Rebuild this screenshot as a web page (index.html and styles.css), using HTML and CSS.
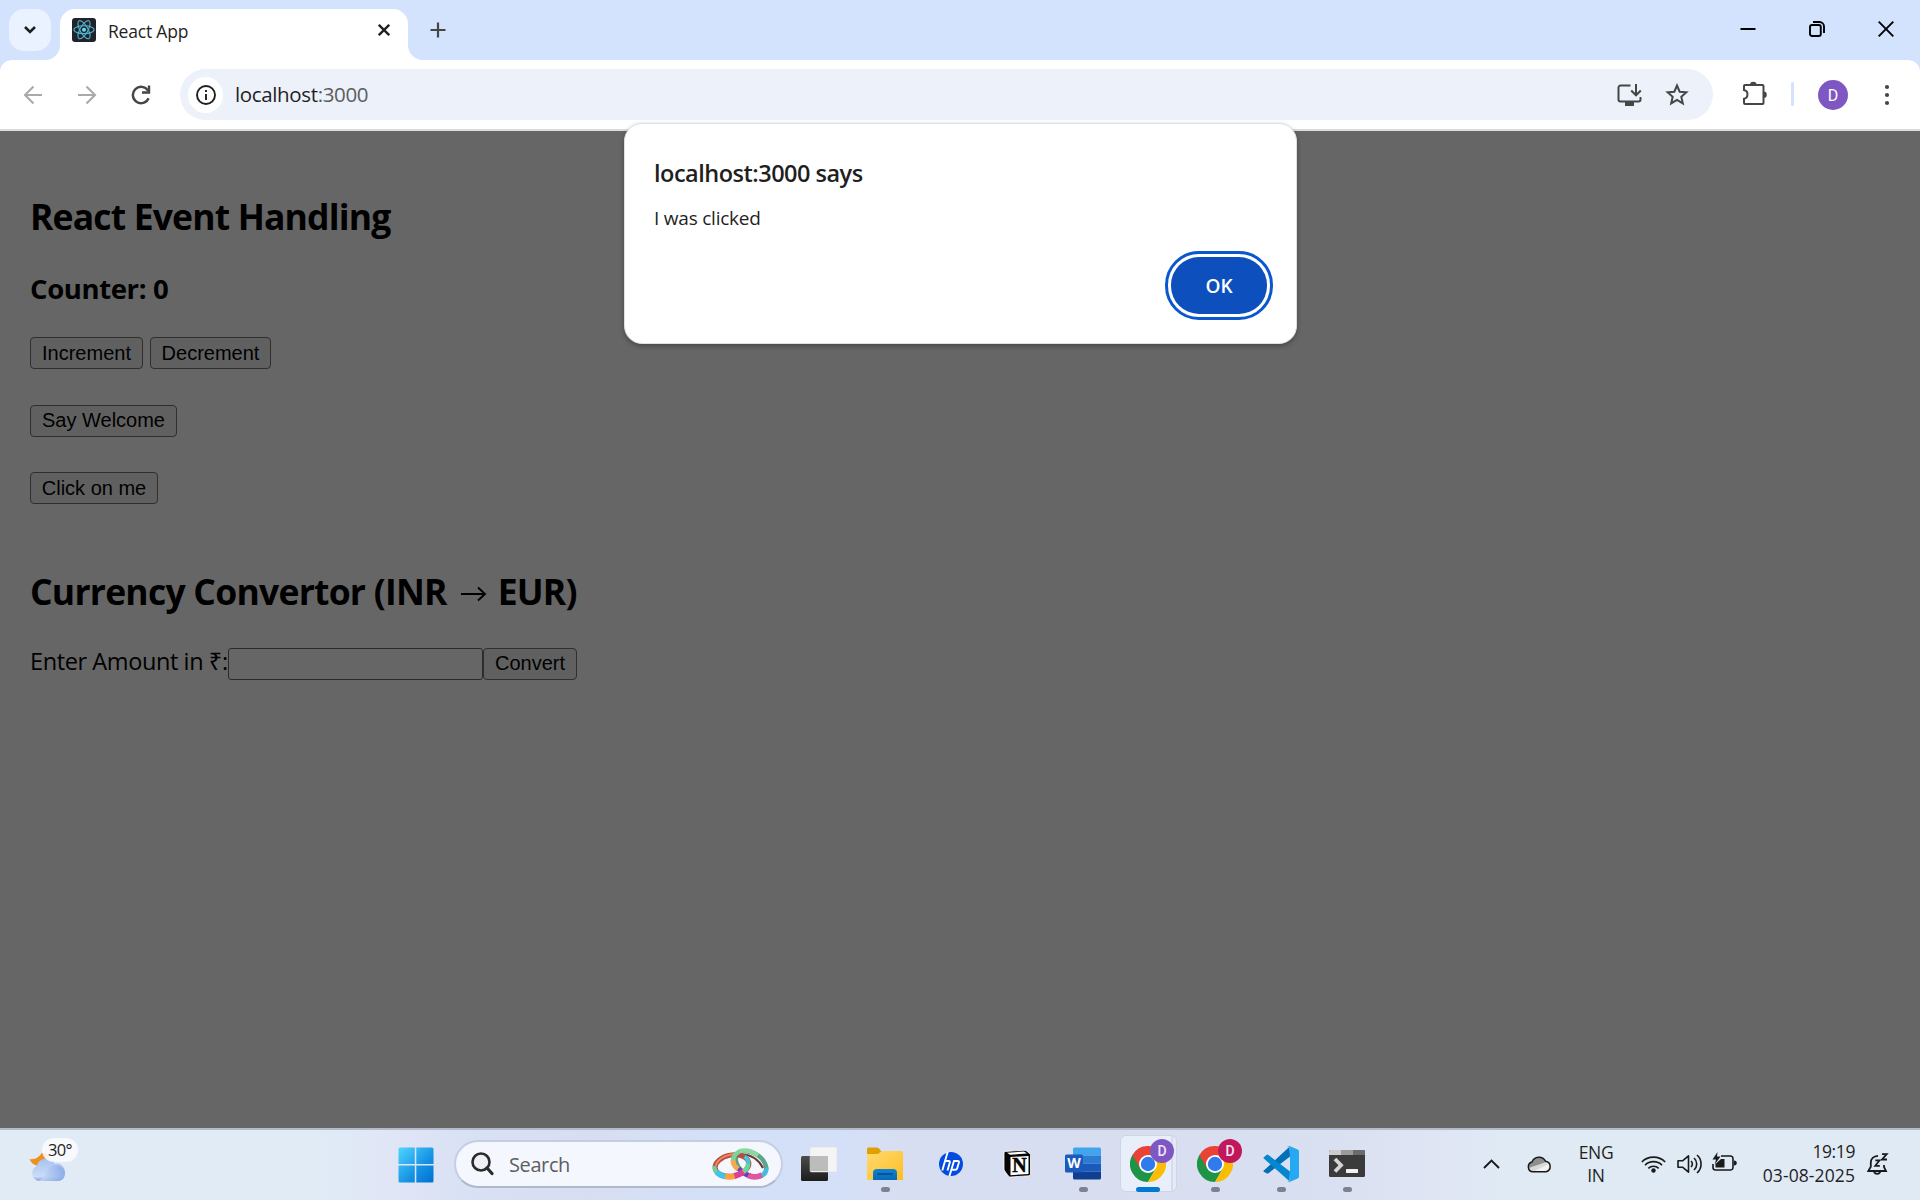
FILE: index.html
```
<!DOCTYPE html>
<html lang="en">
<head>
<meta charset="utf-8">
<title>React App</title>
<link rel="stylesheet" href="styles.css">
</head>
<body>
<div class="screen">
  <header class="tabstrip">
    <button class="tab-search" aria-label="Search tabs"><svg width="14" height="10" viewBox="0 0 14 10"><path d="M2 2l5 5 5-5" fill="none" stroke="#1f1f1f" stroke-width="2.6"/></svg></button>
    <div class="tab">
      <svg class="favicon" width="24" height="24" viewBox="0 0 24 24"><rect width="24" height="24" rx="3" fill="#20232a"/><g fill="none" stroke="#53b9d4" stroke-width="1.1"><ellipse cx="12" cy="11.7" rx="10.2" ry="3.9"/><ellipse cx="12" cy="11.7" rx="10.2" ry="3.9" transform="rotate(60 12 11.7)"/><ellipse cx="12" cy="11.7" rx="10.2" ry="3.9" transform="rotate(120 12 11.7)"/></g><circle cx="12" cy="11.7" r="2" fill="#61dafb"/></svg>
      <span class="tab-title">React App</span>
      <svg class="tab-close" width="12" height="12" viewBox="0 0 12 12"><path d="M.8.8l10.4 10.4M11.2.8L.8 11.2" stroke="#1f1f1f" stroke-width="2.3"/></svg>
    </div>
    <svg class="new-tab" width="16" height="16" viewBox="0 0 16 16"><path d="M8 .5v15M.5 8h15" stroke="#444746" stroke-width="2.2"/></svg>
    <div class="window-controls">
      <svg width="16" height="16" viewBox="0 0 16 16"><path d="M.5 8h15" stroke="#000" stroke-width="2"/></svg>
      <svg width="16" height="16" viewBox="0 0 16 16"><rect x="1" y="4" width="10.8" height="11" rx="2" fill="none" stroke="#000" stroke-width="1.9"/><path d="M4 1h6.5A4.5 4.5 0 0 1 15 5.5V12" fill="none" stroke="#000" stroke-width="1.9"/></svg>
      <svg width="16" height="16" viewBox="0 0 16 16"><path d="M.7.7l14.6 14.6M15.3.7L.7 15.3" stroke="#000" stroke-width="1.9"/></svg>
    </div>
  </header>

  <div class="toolbar-back">
  <nav class="toolbar">
    <svg class="nav-back" width="20" height="20" viewBox="0 0 20 20"><path d="M18 10H1.500M9.500 1.500L1 10l8.500 8.500" fill="none" stroke="#a9aaaa" stroke-width="2.1"/></svg>
    <svg class="nav-forward" width="20" height="20" viewBox="0 0 20 20"><path d="M1 10h16.500M9.500 1.500L18 10l-8.500 8.500" fill="none" stroke="#a9aaaa" stroke-width="2.1"/></svg>
    <svg class="nav-reload" width="20" height="20" viewBox="0 0 20 20"><path d="M17.600 13.200A8.200 8.200 0 1 1 17 5.600" fill="none" stroke="#444746" stroke-width="2.400"/><path d="M18 .6V7.500H11" fill="none" stroke="#444746" stroke-width="2.400"/></svg>
    <div class="omnibox">
      <span class="site-info"><svg width="20" height="20" viewBox="0 0 20 20"><circle cx="10" cy="10" r="9" fill="none" stroke="#1f1f1f" stroke-width="1.900"/><path d="M10 9v6M10 5v2" stroke="#1f1f1f" stroke-width="1.900"/></svg></span>
      <span class="url">localhost<span class="port">:3000</span></span>
      <svg class="install" width="25" height="22" viewBox="0 0 25 22"><path d="M13.500 1.500H3.500a2 2 0 0 0-2 2V15.500a2 2 0 0 0 2 2h18a2 2 0 0 0 2-2V13" fill="none" stroke="#444746" stroke-width="2"/><path d="M8 18h9v4H8z" fill="#444746"/><path d="M19 0v10.500M14.200 6.500l4.800 4.800 4.800-4.800" fill="none" stroke="#444746" stroke-width="2"/></svg>
      <svg class="star" width="24" height="23" viewBox="0 0 24 23"><path d="M12 2.500l2.650 6.200 6.700.6-5.050 4.450 1.500 6.600L12 16.850 6.200 20.350l1.500-6.600L2.650 9.300l6.700-.6z" fill="none" stroke="#444746" stroke-width="2"/></svg>
    </div>
    <svg class="puzzle" width="26" height="25" viewBox="0 0 26 25"><path d="M3 4h17.500a1 1 0 0 1 1 1V22a1 1 0 0 1-1 1H3a1 1 0 0 1-1-1v-4.300a4.400 4.400 0 0 0 0-8.600V5a1 1 0 0 1 1-1z" fill="none" stroke="#444746" stroke-width="2"/><path d="M8 4a3.300 3.300 0 0 1 6.600 0zM21.500 10.500a3.300 3.300 0 0 1 0 6.600z" fill="#444746"/></svg>
    <span class="divider"></span>
    <span class="avatar">D</span>
    <svg class="kebab" width="6" height="22" viewBox="0 0 6 22"><g fill="#444746"><circle cx="3" cy="3" r="2.100"/><circle cx="3" cy="11" r="2.100"/><circle cx="3" cy="19" r="2.100"/></g></svg>
  </nav>
  </div>

  <main class="page">
    <h1 class="title">React Event Handling</h1>
    <h2 class="counter">Counter: 0</h2>
    <div class="button-row row-counter"><button class="btn increment">Increment</button><button class="btn decrement">Decrement</button></div>
    <div class="button-row row-welcome"><button class="btn raised welcome">Say Welcome</button></div>
    <div class="button-row row-click"><button class="btn click-me">Click on me</button></div>
    <h1 class="title converter-title">Currency Convertor (INR <svg class="arrow" width="26" height="16" viewBox="0 0 26 16"><path d="M0 8h24M17 1.500L24 8l-7 6.500" fill="none" stroke="#000" stroke-width="1.900"/></svg> EUR)</h1>
    <div class="converter"><label class="amount-label">Enter Amount in ₹:</label><input class="amount" type="text" aria-label="Amount"><button class="btn raised convert">Convert</button></div>
  </main>

  <footer class="taskbar">
    <div class="weather">
      <svg width="37" height="30" viewBox="0 0 37 30"><defs><linearGradient id="cl" x1="0" y1="0" x2="0" y2="1"><stop offset="0" stop-color="#a5c2f0"/><stop offset=".8" stop-color="#cbdcf7"/><stop offset="1" stop-color="#7fa4e6"/></linearGradient><linearGradient id="cr"><stop offset="0" stop-color="#d3e2f8"/><stop offset="1" stop-color="#7b9fe4"/></linearGradient></defs><path d="M.5 6c6 1 10-2 13-7h6v14H9C5 12 2 10 .5 6z" fill="#f08f1d"/><path d="M9 28a8 8 0 0 1-1-15c1-8 14-11 18-2 6-2 10 3 10 9 0 5-3 8-8 8z" fill="url(#cl)"/><path d="M9 28c7-2 7-8 10-12 4-6 17-5 17 4 0 5-3 8-8 8z" fill="url(#cr)" opacity=".75"/></svg>
      <span class="temp">30°</span>
    </div>
    <svg class="start" width="36" height="36" viewBox="0 0 36 36"><defs><linearGradient id="win" x1="0" y1="0" x2="1" y2="1"><stop offset="0" stop-color="#50d5ff"/><stop offset=".6" stop-color="#1592e3"/><stop offset="1" stop-color="#0071d0"/></linearGradient></defs><path d="M2 .5h14.800v16.600H.5V2A1.500 1.500 0 0 1 2 .5zM18.300.5H34A1.500 1.500 0 0 1 35.500 2v15.100H18.300zM.5 18.500h16.300v17H2A1.500 1.500 0 0 1 .5 34zM18.300 18.500h17.200V34a1.500 1.500 0 0 1-1.500 1.500H18.300z" fill="url(#win)"/></svg>
    <div class="search">
      <svg width="23" height="24" viewBox="0 0 23 24"><circle cx="10" cy="10" r="8.500" fill="#eef0f6" stroke="#2b2b2b" stroke-width="2.600"/><path d="M16 16l5 5.500" stroke="#2b2b2b" stroke-width="3.200" stroke-linecap="round"/></svg>
      <span class="search-text">Search</span>
      <svg class="rings" width="58" height="32" viewBox="0 0 58 32"><g fill="none"><ellipse cx="39" cy="16" rx="16.500" ry="11" transform="rotate(32 39 16)" stroke="#5f9f85" stroke-width="4.500"/><path d="M27 7Q43 5 51 20" stroke="#6b3a33" stroke-width="2.200"/><path d="M26.500 20.500q5 6 12 7.500" stroke="#6939c9" stroke-width="5"/><path d="M36 27.500q7 3 14-.5" stroke="#e0559f" stroke-width="5.500"/><path d="M50 27.500q5-2.500 4.500-8" stroke="#45bde0" stroke-width="4"/><path d="M54.500 20q-1-7-8-12" stroke="#5aa796" stroke-width="3"/><path d="M46 7.500Q36 .5 27 3.500" stroke="#8bd8a0" stroke-width="4.500"/><ellipse cx="20" cy="17.500" rx="17" ry="10.500" transform="rotate(-10 20 17.500)" stroke="#b94c3a" stroke-width="5"/><path d="M3.500 18Q7 7.500 23 6" stroke="#ed8a65" stroke-width="2"/><path d="M2.500 18q-.5 4 2.500 6.500" stroke="#72cf9c" stroke-width="4"/><path d="M4.500 24q4 4 9 4.500" stroke="#3ec6ea" stroke-width="5.500"/><path d="M13 28.500q5 1 10-.5" stroke="#f8a13e" stroke-width="5.500"/><path d="M22.500 28q6-1.500 9.500-5" stroke="#df3d92" stroke-width="6"/><path d="M31.500 24q5-4 4.500-9" stroke="#69d69c" stroke-width="4.500"/><path d="M36.500 16q0-5-4-7.500" stroke="#45c5df" stroke-width="4"/><path d="M27.500 3.500q-8 4-6 12" stroke="#7ad39a" stroke-width="4.500"/><path d="M21 12q0 6 5 9" stroke="#f5aa50" stroke-width="5"/></g></svg>
    </div>
    <div class="app"><svg width="36" height="36" viewBox="0 0 36 36"><defs><linearGradient id="tv" x1="0" y1="0" x2="0" y2="1"><stop offset="0" stop-color="#4b4b48"/><stop offset="1" stop-color="#1d1d1c"/></linearGradient></defs><rect y="10" width="27" height="25" rx="1.500" fill="url(#tv)"/><rect x="9" y="1" width="27" height="25" rx="1.500" fill="#f4f4f4" stroke="#ddd" stroke-width=".5"/><path d="M9 10h18v15H9z" fill="#bcbcbc"/></svg></div>
    <div class="app"><svg width="36" height="36" viewBox="0 0 36 36"><defs><linearGradient id="fo" x1="0" y1="0" x2="1" y2="1"><stop offset="0" stop-color="#ffdb70"/><stop offset="1" stop-color="#fdbd22"/></linearGradient><linearGradient id="fb" x1="0" y1="0" x2="0" y2="1"><stop offset="0" stop-color="#1282d2"/><stop offset="1" stop-color="#0869b8"/></linearGradient></defs><path d="M0 3q0-1.500 1.500-1.500H10q1.500 0 2.500 1.500L14 5H34v8H0z" fill="#dfa000"/><path d="M0 8h11l3.500-3H34q2 0 2 2v27H0z" fill="url(#fo)"/><path d="M6 34V27q0-4 4-4h16q4 0 4 4v7z" fill="url(#fb)"/><path d="M11 28h14" stroke="#08559b" stroke-width="2" stroke-linecap="round"/></svg><i class="dot"></i></div>
    <div class="app"><svg width="24" height="24" viewBox="0 0 24 24"><circle cx="12" cy="12" r="12" fill="#034be1"/><g fill="none" stroke="#fff" stroke-width="1.900"><path d="M8.800-.5L3.300 18.500M6.200 9h3.600q1.400 0 1 1.500L8.500 18.500"/><path d="M10.300 24.500L15 9h3.800q1.500 0 1.100 1.500l-1.700 5.700q-.4 1.500-1.900 1.500h-3.500"/></g></svg></div>
    <div class="app"><svg width="28" height="29" viewBox="0 0 28 29"><path d="M2 2.500L21 1.200q1.500 0 2.500.8l3.500 2.800q.5.500.5 1.500V25q0 1.700-1.700 1.800L7.500 28q-1.500 0-2.200-1L1.700 22Q1 21 1 20V4q0-1.400 1-1.500z" fill="#050505" stroke="#fff" stroke-width=".8"/><path d="M4 3.700l17-1.200 3 2-17 1.200z" fill="#fff"/><path d="M7.500 8l18-1v18l-18 1.200z" fill="#fff"/><text class="notion-letter" x="9.200" y="23.300">N</text></svg></div>
    <div class="app"><svg width="36" height="34" viewBox="0 0 36 34"><path d="M8 2q0-1.500 1.500-1.500h25Q36 .5 36 2v6.500H8z" fill="#41a5ee"/><path d="M8 8.500h28v8H8z" fill="#2b7cd3"/><path d="M8 16.500h28v8H8z" fill="#185abd"/><path d="M8 24.500h28V31q0 1.500-1.500 1.500h-25Q8 32.500 8 31z" fill="#103f91"/><rect y="7.500" width="18" height="18" rx="1.500" fill="#1b5bbd"/><text class="word-letter" x="2.200" y="21.300">W</text></svg><i class="dot"></i></div>
    <div class="app active"><svg width="36" height="36" viewBox="0 0 36 36"><path d="M18 0L2.410 9A18 18 0 0 0 18 36L25.800 22.500 18 27 10.200 22.500z" fill="#1e9446"/><path d="M18 9L2.410 9A18 18 0 0 1 33.590 9z" fill="#ea4335"/><path d="M2.410 9L10.200 22.500 18 9z" fill="#ea4335"/><path d="M33.590 9H18l7.800 13.500L18 36A18 18 0 0 0 33.590 9z" fill="#fbbc04"/><circle cx="18" cy="18" r="9" fill="#fff"/><circle cx="18" cy="18" r="7.200" fill="#2f7bee"/></svg><b class="profile violet">D</b><i class="dot wide"></i></div>
    <div class="app"><svg width="36" height="36" viewBox="0 0 36 36"><path d="M18 0L2.410 9A18 18 0 0 0 18 36L25.800 22.500 18 27 10.200 22.500z" fill="#1e9446"/><path d="M18 9L2.410 9A18 18 0 0 1 33.590 9z" fill="#ea4335"/><path d="M2.410 9L10.200 22.500 18 9z" fill="#ea4335"/><path d="M33.590 9H18l7.800 13.500L18 36A18 18 0 0 0 33.590 9z" fill="#fbbc04"/><circle cx="18" cy="18" r="9" fill="#fff"/><circle cx="18" cy="18" r="7.200" fill="#2f7bee"/></svg><b class="profile crimson">D</b><i class="dot"></i></div>
    <div class="app"><svg width="36" height="36" viewBox="0 0 36 36"><path d="M.8 24.500L26.500.8 27 10.500 5.500 27.200q-1 .8-2 0L.8 25.800q-.8-.6 0-1.300z" fill="#0070b8"/><path d="M.8 11.200L3.500 9q1-.8 2 0L27 25.500 26.500 35.300.8 12.500q-.8-.7 0-1.300z" fill="#0487d0"/><path d="M26.500 0l8.200 3.500Q36 4.200 36 5.500v25q0 1.300-1.300 2L26.500 36q-1.500.3-2.500-.9 3 1.200 3-1.900V2.800Q27-.3 24 .9q1-1.200 2.500-.9z" fill="#27a8f2"/></svg><i class="dot"></i></div>
    <div class="app"><svg width="36" height="27" viewBox="0 0 36 27"><rect width="36" height="27" rx="1.500" fill="#3b3b3b"/><path d="M1.500 0H12v5H0V1.500Q0 0 1.500 0z" fill="#ccc"/><path d="M12 0h12v5H12z" fill="#9a9a9a"/><path d="M24 0h10.500Q36 0 36 1.500V5H24z" fill="#6b6b6b"/><path d="M6 9l6 6.300L6 21.500" fill="none" stroke="#d6d6d6" stroke-width="3.800"/><rect x="17" y="19" width="12" height="4" rx=".6" fill="#f2f2f2"/></svg><i class="dot"></i></div>

    <div class="tray">
      <svg class="chevron" width="17" height="10" viewBox="0 0 17 10"><path d="M1 9l7.500-7.500L16 9" fill="none" stroke="#1a1a1a" stroke-width="1.900"/></svg>
      <svg class="onedrive" width="25" height="18" viewBox="0 0 25 18"><path d="M6 16.800A5 5 0 0 1 5 7 7.500 7.500 0 0 1 18.500 6.200 5.400 5.400 0 0 1 19 16.800z" fill="#d9d9d9"/><path d="M1.500 13Q.5 8 5 7 9-1 17 4l2 3L12 9.500z" fill="#8f8f8f"/><path d="M8 15.800l14-7q3 7-3 8z" fill="#f2f2f2"/><path d="M6 16.800A5 5 0 0 1 5 7 7.500 7.500 0 0 1 18.500 6.200 5.400 5.400 0 0 1 19 16.800z" fill="none" stroke="#1a1a1a" stroke-width="1.500"/></svg>
      <div class="language"><span>ENG</span><span>IN</span></div>
      <svg class="wifi" width="25" height="18" viewBox="0 0 25 18"><g fill="none" stroke="#1a1a1a" stroke-width="1.600"><path d="M.8 7a16.500 16.500 0 0 1 23.400 0M4 10.200a12 12 0 0 1 17 0M7.300 13.300a7.500 7.500 0 0 1 10.400 0"/></g><circle cx="12.500" cy="15.500" r="2.200" fill="#1a1a1a"/></svg>
      <svg class="sound" width="25" height="20" viewBox="0 0 25 20"><g fill="none" stroke="#1a1a1a" stroke-width="1.600"><path d="M1 6.800h4.500L11.500 1.800v16.400L5.500 13.200H1z" stroke-linejoin="round"/><path d="M14 7a4 4 0 0 1 0 6M17 4a8 8 0 0 1 0 12M20 1a12 12 0 0 1 0 18"/></g></svg>
      <svg class="battery" width="25" height="20" viewBox="0 0 25 20"><path d="M9 4h9.500a2.500 2.500 0 0 1 2.500 2.500v9a2.500 2.500 0 0 1-2.500 2.500H3.500A2.500 2.500 0 0 1 1 15.500V12" fill="none" stroke="#1a1a1a" stroke-width="1.600"/><path d="M3.500 12L9 7h3.500v8.500h-9zM22 8.500q2.800.2 2.800 2.500T22 13.500zM5.500 0L.5 7.500H4l-1.200 5L8.500 4.500H5z" fill="#1a1a1a"/></svg>
      <div class="clock"><span class="time">19:19</span><span class="date">03-08-2025</span></div>
      <svg class="bell" width="22" height="22" viewBox="0 0 22 22"><path d="M11 2.800C6.500 3 3.800 6 3.800 9.800v4L1.300 18H19l-2-4V12M7 18.500a3.300 3.300 0 0 0 6.300 0" fill="none" stroke="#1a1a1a" stroke-width="1.800"/><path d="M8.300 7.300h4.200l-4.200 5.500h4.500M15 1.200h4.700L15 6.500h5" fill="none" stroke="#1a1a1a" stroke-width="1.800"/></svg>
    </div>
  </footer>

  <div class="dialog" role="alertdialog">
    <p class="dialog-title">localhost:3000 says</p>
    <p class="dialog-text">I was clicked</p>
    <button class="ok">OK</button>
  </div>
</div>
</body>
</html>
```
FILE: styles.css
```
* { box-sizing: border-box; }
body {
  margin: 0;
  font-family: "Open Sans", "Noto Sans", sans-serif;
  color: #1f1f1f;
}
svg { display: block; flex: none; }
p, h1, h2 { margin: 0; }
button { font-family: inherit; }

.screen {
  position: relative;
  display: flex;
  flex-direction: column;
  width: 1920px;
  height: 1200px;
  overflow: hidden;
}

/* Tab strip */
.tabstrip {
  display: flex;
  flex: none;
  height: 60px;
  padding-left: 9px;
  background: #d3e2fd;
}
.tab-search {
  display: flex;
  align-items: center;
  justify-content: center;
  width: 42px;
  height: 42px;
  margin-top: 9px;
  padding: 0;
  border: 0;
  border-radius: 15px;
  background: #ebf2ff;
}
.tab {
  position: relative;
  display: flex;
  align-items: flex-start;
  width: 348px;
  height: 51px;
  margin: 9px 0 0 9px;
  padding: 9px 18px 0 12px;
  border-radius: 15px 15px 0 0;
  background: #fff;
}
.tab::before, .tab::after {
  content: "";
  position: absolute;
  bottom: 0;
  width: 15px;
  height: 15px;
}
.tab::before { left: -15px; background: radial-gradient(circle at 0 0, transparent 14.5px, #fff 15.5px); }
.tab::after { right: -15px; background: radial-gradient(circle at 100% 0, transparent 14.5px, #fff 15.5px); }
.tab-title {
  flex: 1;
  margin: 1px 0 0 12px;
  font-size: 17.5px;
  line-height: 24px;
  letter-spacing: -0.2px;
}
.tab-close { margin-top: 6px; }
.new-tab { margin: 22px 0 0 22px; }
.window-controls {
  display: flex;
  gap: 53px;
  margin: 21px 26px 0 auto;
}

/* Toolbar */
.toolbar-back {
  flex: none;
  background: #d3e2fd;
}
.toolbar {
  display: flex;
  align-items: center;
  height: 71px;
  padding: 0 30px 1px 24px;
  border-bottom: 2px solid #dcdcdc;
  border-radius: 12px 12px 0 0;
  background: #fff;
}
.nav-back, .nav-forward, .nav-reload { margin-top: 1px; }
.nav-forward { margin-left: 33px; }
.nav-reload { margin-left: 34px; }
.omnibox {
  display: flex;
  align-items: center;
  width: 1533px;
  height: 51px;
  margin: 1px 0 0 29px;
  padding: 0 24px 0 8px;
  border-radius: 26px;
  background: #ecf1fa;
}
.site-info {
  display: flex;
  align-items: center;
  justify-content: center;
  width: 35px;
  height: 36px;
  border-radius: 18px;
  background: #fff;
}
.url {
  flex: 1;
  margin: 0 0 2px 12px;
  font-size: 20.5px;
  line-height: 30px;
  letter-spacing: -0.36px;
}
.port { color: #5a5d60; }
.star { margin-left: 23px; }
.puzzle { margin: 0 0 2px 29px; }
.divider {
  width: 3px;
  height: 24px;
  margin-left: 23px;
  border-radius: 2px;
  background: #d3e3fd;
}
.avatar {
  width: 30px;
  height: 30px;
  margin: 1px 0 0 24px;
  border-radius: 50%;
  background: #7e57c2;
  color: #fff;
  font: 400 16px/31px Roboto, sans-serif;
  text-align: center;
}
.kebab { margin: 1px 0 0 36px; }

/* Page beneath the modal scrim */
.page {
  flex: 1;
  padding: 61px 30px 0;
  background: #666;
  color: #000;
}
.title {
  font-size: 35.5px;
  line-height: 48px;
  letter-spacing: -0.84px;
  white-space: nowrap;
}
.counter {
  margin-top: 31px;
  font-size: 27.5px;
  line-height: 36px;
  letter-spacing: -0.38px;
}
.button-row { display: flex; gap: 7px; height: 32px; }
.row-counter { margin-top: 30px; }
.row-welcome { margin-top: 36px; }
.row-click { margin-top: 35px; }
.btn {
  height: 32px;
  padding: 0;
  border: 1px solid #2f2f2f;
  border-radius: 4px;
  background: #606060;
  color: #000;
  font: 20px/28px "Liberation Sans", Arial, sans-serif;
  text-align: center;
}
.raised { padding-bottom: 2px; }
.increment { width: 113px; }
.decrement { width: 121px; }
.welcome { width: 147px; }
.click-me { width: 128px; }
.convert { width: 94px; }
.converter-title {
  display: flex;
  align-items: center;
  margin-top: 63px;
  letter-spacing: -0.76px;
  white-space: pre;
}
.arrow { margin: 5px 2px 0 6px; }
.converter {
  display: flex;
  align-items: center;
  height: 32px;
  margin-top: 33px;
}
.amount-label {
  width: 198px;
  padding-bottom: 7px;
  font-size: 23.5px;
  line-height: 32px;
  letter-spacing: -0.4px;
  white-space: nowrap;
}
.amount {
  width: 255px;
  height: 32px;
  padding: 0;
  border: 1px solid #2a2a2a;
  border-radius: 3px;
  background: #666;
}

/* Alert dialog */
.dialog {
  position: absolute;
  top: 123px;
  left: 624px;
  display: flex;
  flex-direction: column;
  width: 673px;
  height: 221px;
  padding: 31px 29px 0;
  border: 1px solid #dfe0e0;
  border-radius: 18px;
  background: #fff;
  box-shadow: 0 2px 5px rgba(0, 0, 0, 0.3);
}
.dialog-title {
  font-size: 23.5px;
  font-weight: 600;
  line-height: 36px;
  letter-spacing: -0.5px;
}
.dialog-text {
  margin-top: 10px;
  font-size: 19px;
  line-height: 34px;
  letter-spacing: -0.22px;
}
.ok {
  align-self: flex-end;
  width: 96px;
  height: 57px;
  margin-top: 22px;
  padding: 0;
  border: 0;
  border-radius: 28px;
  outline: 3px solid #0b57d0;
  outline-offset: 3px;
  background: #0d50bd;
  color: #fff;
  font-size: 19px;
  font-weight: 600;
}

/* Taskbar */
.taskbar {
  position: relative;
  display: flex;
  flex: none;
  height: 72px;
  border-top: 2px solid #b2bcc9;
  background: linear-gradient(90deg, #e0ebf6 0, #e0ebf6 320px, #e1e6f6 390px, #d9e1f4 460px, #d8def1 590px, #d3e0f8 720px, #d3e0f8 830px, #d7def2 900px, #d8def0 1120px, #d9e0f1 1330px, #e0e5f4 1440px, #dfeaf5 1500px, #dfeaf5 1920px);
}
.weather { position: relative; width: 80px; padding: 23px 0 0 29px; }
.temp {
  position: absolute;
  top: 8px;
  left: 42px;
  width: 36px;
  height: 24px;
  border-radius: 12px;
  background: rgba(250, 250, 252, 0.92);
  font-size: 16.5px;
  line-height: 23px;
  letter-spacing: -0.7px;
  text-align: center;
}
.start { margin: 17px 0 0 318px; }
.search {
  display: flex;
  align-items: center;
  width: 329px;
  height: 48px;
  margin: 10px 4px 0 20px;
  padding: 0 11px 0 15px;
  border: 2px solid #c5cee3;
  border-bottom-color: #b0b9cc;
  border-radius: 24px;
  background: #f4f7fd;
}
.search-text {
  flex: 1;
  margin-left: 15px;
  color: #5c5d60;
  font-size: 20px;
  letter-spacing: -0.4px;
}
.app {
  position: relative;
  display: flex;
  align-items: center;
  justify-content: center;
  width: 54px;
  height: 57px;
  margin: 5px 6px 0;
  border-radius: 6px;
}
.search + .app { margin-left: 5px; }
.active {
  width: 57px;
  margin: 5px 5px 0 4px;
  padding-right: 1px;
  border: 1px solid #cdd5e6;
  background: linear-gradient(90deg, #e9effa 0 50px, #d5dceb 50px 52px, #e5ebf6 52px);
}
.dot {
  position: absolute;
  bottom: 0;
  left: calc(50% - 4.5px);
  width: 9px;
  height: 5px;
  border-radius: 3px;
  background: #7d828d;
}
.dot.wide { bottom: -1px; left: 15px; width: 24px; background: #0078d4; }
.profile {
  position: absolute;
  top: 4px;
  right: 0;
  width: 24px;
  height: 24px;
  border-radius: 50%;
  color: #f0e6f7;
  font: 500 14px/24px Roboto, sans-serif;
  text-align: center;
}
.active .profile { top: 3px; right: 2px; }
.violet { background: #7e57c2; }
.crimson { background: #c2185b; }
.notion-letter { font: bold 20px "Liberation Serif", serif; fill: #050505; stroke: #050505; stroke-width: 0.5px; }
.word-letter { font: bold 14px "Open Sans", sans-serif; fill: #fff; }

/* System tray */
.tray {
  display: flex;
  align-items: center;
  width: 407px;
  margin-left: auto;
  height: 68px;
}
.chevron { margin-left: -30px; }
.onedrive { margin-left: 27px; }
.language {
  display: flex;
  flex-direction: column;
  width: 42px;
  margin: 0 24px 0 23px;
  font-size: 17.5px;
  line-height: 23px;
  letter-spacing: -0.4px;
  text-align: center;
}
.sound { margin-left: 11px; }
.battery { margin: -4px 0 0 10px; }
.clock {
  display: flex;
  flex-direction: column;
  align-items: flex-end;
  width: 118px;
  margin-top: -2px;
  font-size: 17.5px;
  line-height: 24px;
}
.time { letter-spacing: -0.4px; }
.date { letter-spacing: 0.1px; }
.bell { margin-left: 12px; }
```
